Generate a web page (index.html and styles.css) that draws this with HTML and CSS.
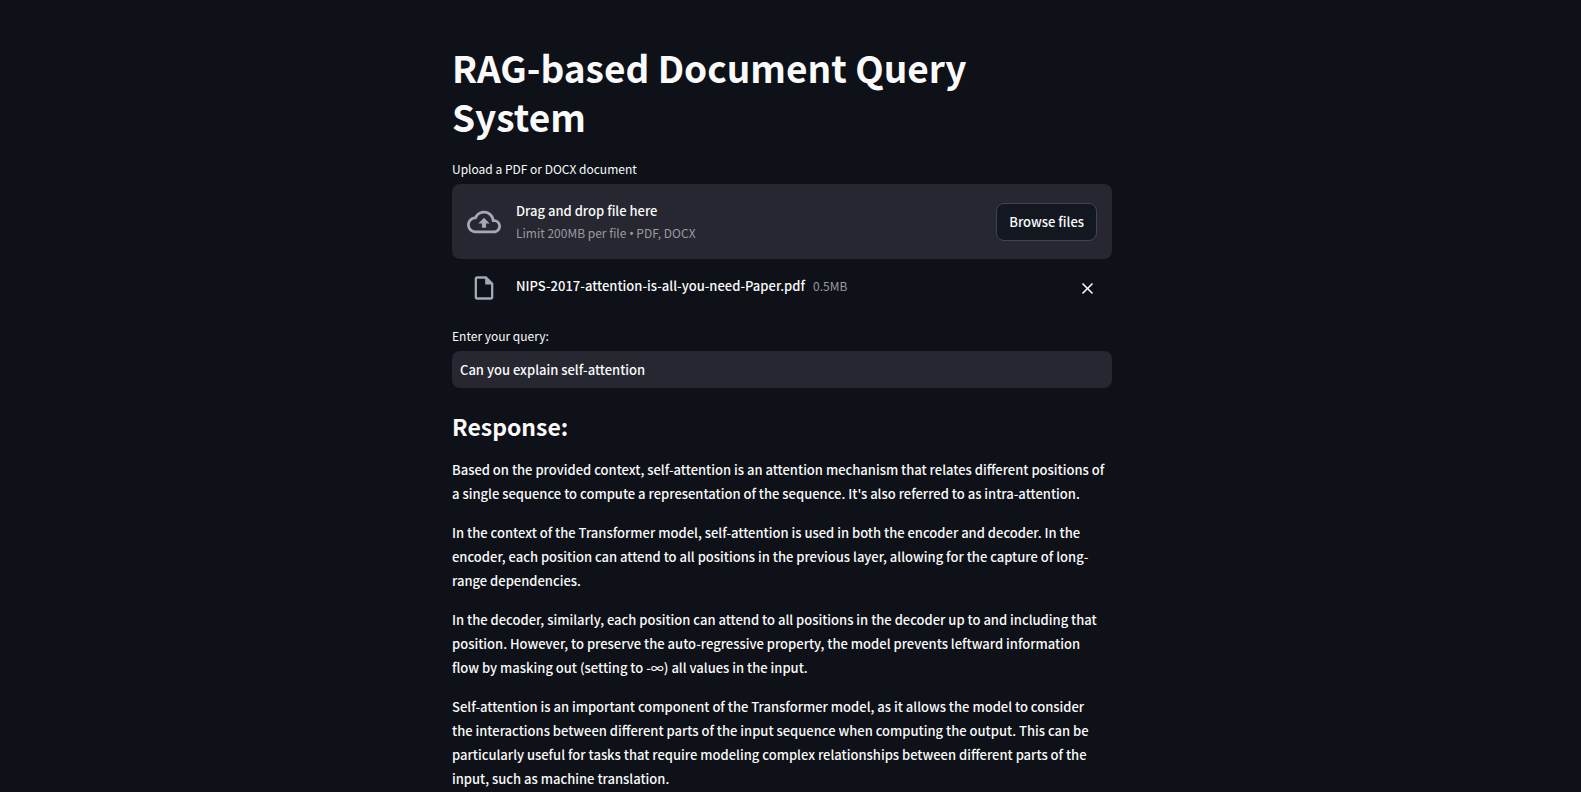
FILE: index.html
```html
<!DOCTYPE html>
<html lang="en">
<head>
<meta charset="utf-8">
<meta name="viewport" content="width=device-width, initial-scale=1">
<title>RAG-based Document Query System</title>
<link rel="stylesheet" href="styles.css">
</head>
<body>
<main class="page">
  <div class="column">
    <h1 class="title">RAG-based Document Query<br>System</h1>

    <section class="uploader">
      <label class="field-label" for="browse">Upload a PDF or DOCX document</label>
      <div class="dropzone">
        <svg class="cloud-icon" viewBox="0 0 24 24" fill="currentColor" aria-hidden="true"><path d="M19.35 10.04A7.49 7.49 0 0 0 12 4C9.11 4 6.6 5.64 5.35 8.04A5.994 5.994 0 0 0 0 14c0 3.31 2.69 6 6 6h13c2.76 0 5-2.24 5-5 0-2.64-2.05-4.78-4.65-4.96zM19 18H6c-2.21 0-4-1.79-4-4 0-2.05 1.53-3.76 3.56-3.97l1.07-.11.5-.95A5.469 5.469 0 0 1 12 6c2.62 0 4.88 1.86 5.39 4.43l.3 1.5 1.53.11A2.98 2.98 0 0 1 22 15c0 1.65-1.35 3-3 3zM8 13h2.55v3h2.9v-3H16l-4-4z"/></svg>
        <div class="dropzone-text">
          <span class="drop-title">Drag and drop file here</span>
          <small class="hint">Limit 200MB per file <span class="bullet">•</span> PDF, DOCX</small>
        </div>
        <button class="browse" id="browse" type="button">Browse files</button>
      </div>
      <div class="file-row">
        <svg class="file-icon" viewBox="0 0 24 24" fill="currentColor" aria-hidden="true"><path d="M14 2H6c-1.1 0-1.99.9-1.99 2L4 20c0 1.1.89 2 1.99 2H18c1.1 0 2-.9 2-2V8l-6-6zM6 20V4h7v5h5v11H6z"/></svg>
        <div class="file-info">
          <span class="file-name">NIPS-2017-attention-is-all-you-need-Paper.pdf</span>
          <small class="hint">0.5MB</small>
        </div>
        <button class="remove" type="button" aria-label="Remove file">
          <svg class="remove-icon" viewBox="0 0 24 24" fill="currentColor" aria-hidden="true"><path d="M19 6.41 17.59 5 12 10.59 6.41 5 5 6.41 10.59 12 5 17.59 6.41 19 12 13.41 17.59 19 19 17.59 13.41 12z"/></svg>
        </button>
      </div>
    </section>

    <section class="query">
      <label class="field-label" for="query">Enter your query:</label>
      <input class="query-input" id="query" type="text" value="Can you explain self-attention">
    </section>

    <section class="response">
      <h2 class="subtitle">Response:</h2>
      <p>Based on the provided context, self-attention is an attention mechanism that relates different positions of<br>
      a single sequence to compute a representation of the sequence. It's also referred to as intra-attention.</p>
      <p>In the context of the Transformer model, self-attention is used in both the encoder and decoder. In the<br>
      encoder, each position can attend to all positions in the previous layer, allowing for the capture of long-<br>
      range dependencies.</p>
      <p>In the decoder, similarly, each position can attend to all positions in the decoder up to and including that<br>
      position. However, to preserve the auto-regressive property, the model prevents leftward information<br>
      flow by masking out (setting to -∞) all values in the input.</p>
      <p>Self-attention is an important component of the Transformer model, as it allows the model to consider<br>
      the interactions between different parts of the input sequence when computing the output. This can be<br>
      particularly useful for tasks that require modeling complex relationships between different parts of the<br>
      input, such as machine translation.</p>
    </section>
  </div>
</main>
</body>
</html>
```

FILE: styles.css
```css
* {
  box-sizing: border-box;
}

html {
  height: 100%;
}

body {
  height: 100%;
  margin: 0;
  overflow: hidden;
  background: #0e1117;
  color: #fafafa;
  font-family: "Source Sans Pro", "Noto Sans CJK SC", "Noto Sans", sans-serif;
  font-size: 13px;
  font-weight: 500;
  line-height: 24px;
}

.page {
  height: 100%;
  overflow: hidden;
  padding: 43px 17px 0 0;
}

.column {
  max-width: 660px;
  margin: 0 auto;
}

.title {
  margin: 0 0 18px;
  font-size: 37px;
  font-weight: 700;
  line-height: 49px;
}

.field-label {
  display: block;
  margin-bottom: 5px;
  font-size: 12px;
  font-weight: 400;
  line-height: 20px;
}

.dropzone {
  display: flex;
  align-items: center;
  padding: 15px;
  border-radius: 8px;
  background: #262730;
}

.cloud-icon {
  width: 34px;
  height: 34px;
  margin-right: 15px;
  color: #a3a8b8;
}

.dropzone-text {
  display: flex;
  flex: 1;
  flex-direction: column;
}

.hint {
  color: #9a9aa0;
  font-size: 12px;
  font-weight: 400;
  line-height: 20px;
}

.bullet {
  font-family: "Noto Sans", sans-serif;
}

.browse {
  height: 38px;
  padding: 0 12px;
  border: 1px solid #41444c;
  border-radius: 8px;
  background: #131720;
  color: inherit;
  font: inherit;
}

.file-row {
  display: flex;
  align-items: center;
  padding: 15px 15px 0;
}

.file-icon {
  width: 28px;
  height: 28px;
  margin: 0 18px 0 3px;
  color: #a3a8b8;
}

.file-info {
  display: flex;
  align-items: center;
  gap: 8px;
  padding-bottom: 4px;
}

.remove {
  display: flex;
  margin-left: auto;
  padding: 0;
  border: 0;
  background: none;
  color: inherit;
}

.remove-icon {
  width: 19px;
  height: 19px;
}

.query {
  margin-top: 24px;
}

.query-input {
  display: block;
  width: 100%;
  height: 37px;
  padding: 0 8px;
  border: 0;
  border-radius: 8px;
  outline: 0;
  background: #262730;
  color: inherit;
  font: inherit;
}

.subtitle {
  margin: 22px 0 16px;
  font-size: 23px;
  font-weight: 600;
  line-height: 32px;
}

.response p {
  margin: 0 0 15px;
}
```
